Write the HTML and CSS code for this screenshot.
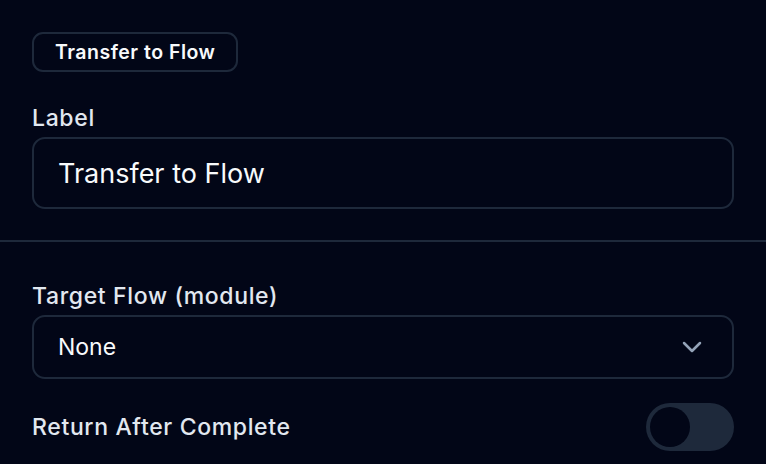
FILE: index.html
```html
<!DOCTYPE html>
<html lang="en">
<head>
<meta charset="utf-8">
<link rel="stylesheet" href="styles.css">
</head>
<body>
<div class="panel">
  <section class="section top">
    <div class="badge">Transfer to Flow</div>
    <div class="field">
      <label class="field-label">Label</label>
      <div class="input">Transfer to Flow</div>
    </div>
  </section>
  <section class="section bottom">
    <div class="field">
      <label class="field-label">Target Flow (module)</label>
      <div class="select">
        <span class="select-value">None</span>
        <svg class="chevron" width="20" height="12" viewBox="0 0 20 12" fill="none" stroke="currentColor" stroke-width="2.5" stroke-linecap="round" stroke-linejoin="round"><path d="M2 2l8 8 8-8"/></svg>
      </div>
    </div>
    <div class="toggle-row">
      <span class="field-label">Return After Complete</span>
      <div class="toggle"><div class="knob"></div></div>
    </div>
  </section>
</div>
</body>
</html>
```

FILE: styles.css
```css
html, body {
  margin: 0;
  padding: 0;
  background: #020617;
}
body {
  font-family: Inter, "Noto Sans", sans-serif;
  color: #f8fafc;
  width: 766px;
  height: 464px;
  overflow: hidden;
}
.section {
  padding: 0 32px;
}
.section.top {
  padding-top: 32px;
  padding-bottom: 31px;
  border-bottom: 2px solid #1e293b;
}
.section.bottom {
  padding-top: 40px;
}
.badge {
  display: inline-flex;
  align-items: center;
  height: 36px;
  padding: 0 21px;
  border: 2px solid #1e293b;
  border-radius: 11px;
  font-size: 19.5px;
  letter-spacing: 0.5px;
  font-weight: 600;
  color: #f8fafc;
}
.top .field {
  margin-top: 32px;
}
.field {
  display: flex;
  flex-direction: column;
  gap: 5px;
}
.field-label {
  font-size: 23px;
  line-height: 28px;
  letter-spacing: 0.65px;
  font-weight: 500;
  color: #e2e8f0;
}
.input {
  height: 68px;
  border: 2px solid #1e293b;
  border-radius: 13px;
  display: flex;
  align-items: center;
  padding: 0 24px;
  font-size: 27px;
  color: #f8fafc;
}
.select {
  height: 60px;
  border: 2px solid #1e293b;
  border-radius: 13px;
  display: flex;
  align-items: center;
  justify-content: space-between;
  padding: 0 30px 0 24px;
  font-size: 23px;
  color: #f8fafc;
}
.chevron {
  color: #94a3b8;
}
.toggle-row {
  margin-top: 24px;
  height: 48px;
  display: flex;
  align-items: center;
  justify-content: space-between;
}
.toggle {
  width: 88px;
  height: 48px;
  border-radius: 24px;
  background: #1e293b;
  display: flex;
  align-items: center;
  padding: 0 4px;
  box-sizing: border-box;
}
.knob {
  width: 40px;
  height: 40px;
  border-radius: 50%;
  background: #020617;
}
```
